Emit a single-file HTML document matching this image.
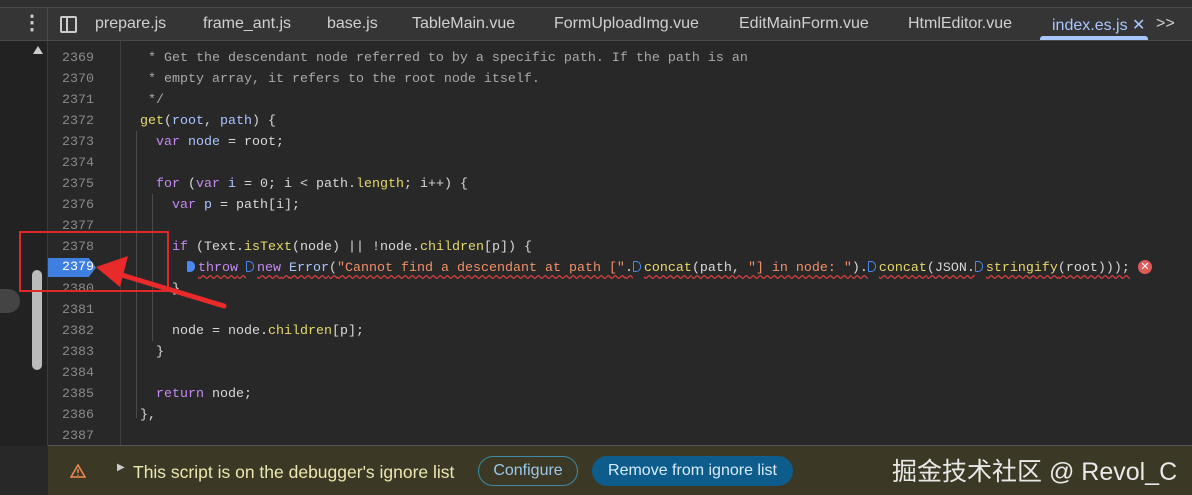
<!DOCTYPE html><html><head><meta charset="utf-8"><style>
body{margin:0;width:1192px;height:494px;background:#282828;overflow:hidden;position:relative;font-family:"Liberation Sans",sans-serif}
.top{position:absolute;left:0;top:0;width:1192px;height:7px;background:#303030;border-bottom:1px solid #4a4a4a}
.tabs{position:absolute;left:0;top:8px;width:1192px;height:32px;background:#353535;border-bottom:1px solid #4a4a4a;color:#d0d0d0;font-size:16px}
.tabs span{position:absolute;top:7px}
.left{position:absolute;left:0;top:41px;width:47px;height:405px;background:#222;border-right:1px solid #3c3c3c}
.gut{position:absolute;left:48px;top:41px;width:72px;height:405px;border-right:1px solid #3e3e3e}
.ln{position:absolute;left:48px;width:46px;text-align:right;font-family:"Liberation Mono",monospace;font-size:13.33px;color:#8a8a8a;line-height:21px;height:21px}
.cl{position:absolute;left:140px;font-family:"Liberation Mono",monospace;font-size:13.33px;color:#d8d8d8;line-height:21px;white-space:pre;height:21px}
.c{color:#a9a9a9}.k{color:#c58af0}.v{color:#a8c4ff}.f{color:#e6d96a}.s{color:#f0906a}
.g{position:absolute;width:1px;background:#4a4a4a}
.foot{position:absolute;left:48px;top:445px;width:1144px;height:49px;background:#3b3925;border-top:1px solid #555;color:#ece6b0;font-size:17.5px}
.m{display:inline-block;width:8px;height:11px;border:1px solid #4a8af0;border-radius:1px 5px 5px 1px;vertical-align:-1px;margin-right:3px;box-sizing:border-box}
.mf{background:#4a8af0}
</style></head><body>
<div class="top"></div>
<div class="tabs">
<span style="left:22px;font-size:20px;top:2px;font-weight:bold">⋮</span>
<div style="position:absolute;left:47px;top:0;width:1px;height:32px;background:#4a4a4a"></div>
<div style="position:absolute;left:60px;top:8px;width:13px;height:13px;border:2px solid #ccc;border-radius:2px"></div><div style="position:absolute;left:66px;top:8px;width:2px;height:15px;background:#ccc"></div>
<span style="left:95px">prepare.js</span><span style="left:203px">frame_ant.js</span><span style="left:327px">base.js</span><span style="left:412px">TableMain.vue</span><span style="left:554px">FormUploadImg.vue</span><span style="left:739px">EditMainForm.vue</span><span style="left:908px">HtmlEditor.vue</span><span style="left:1052px;color:#a8c6ff">index.es.js ✕</span><span style="left:1156px">&gt;&gt;</span>
<div style="position:absolute;left:1040px;top:28px;width:108px;height:4px;background:#a8c6ff;border-radius:3px 3px 0 0"></div>
</div>
<div class="left"></div>
<div style="position:absolute;left:33px;top:46px;width:0;height:0;border-left:5px solid transparent;border-right:5px solid transparent;border-bottom:8px solid #ccc"></div>
<div style="position:absolute;left:32px;top:270px;width:10px;height:100px;background:#bbb;border-radius:5px"></div>
<div style="position:absolute;left:-10px;top:289px;width:30px;height:24px;background:#444;border-radius:12px"></div>
<div class="gut"></div>
<div class="g" style="left:136px;top:131px;height:287px"></div>
<div class="g" style="left:152px;top:194px;height:147px"></div>
<div class="g" style="left:168px;top:257px;height:21px"></div>

<div class="ln" style="top:48px">2369</div><div class="ln" style="top:69px">2370</div><div class="ln" style="top:90px">2371</div><div class="ln" style="top:111px">2372</div><div class="ln" style="top:132px">2373</div><div class="ln" style="top:153px">2374</div><div class="ln" style="top:174px">2375</div><div class="ln" style="top:195px">2376</div><div class="ln" style="top:216px">2377</div><div class="ln" style="top:237px">2378</div>
<div style="position:absolute;left:48px;top:258px;width:48px;height:19px;background:#3f7fe0;clip-path:polygon(0 0,85% 0,100% 50%,85% 100%,0 100%)"></div>
<div class="ln" style="top:257px;color:#fff">2379</div>
<div class="ln" style="top:279px">2380</div><div class="ln" style="top:300px">2381</div><div class="ln" style="top:321px">2382</div><div class="ln" style="top:342px">2383</div><div class="ln" style="top:363px">2384</div><div class="ln" style="top:384px">2385</div><div class="ln" style="top:405px">2386</div><div class="ln" style="top:426px">2387</div>

<div class="cl c" style="top:48px"> * Get the descendant node referred to by a specific path. If the path is an</div>
<div class="cl c" style="top:69px"> * empty array, it refers to the root node itself.</div>
<div class="cl c" style="top:90px"> */</div>
<div class="cl" style="top:111px"><span class="f">get</span>(<span class="v">root</span>, <span class="v">path</span>) {</div>
<div class="cl" style="top:132px">  <span class="k">var</span> <span class="v">node</span> = root;</div>
<div class="cl" style="top:174px">  <span class="k">for</span> (<span class="k">var</span> <span class="v">i</span> = 0; i &lt; path.<span class="f">length</span>; i++) {</div>
<div class="cl" style="top:195px">    <span class="k">var</span> <span class="v">p</span> = path[i];</div>
<div class="cl" style="top:237px">    <span class="k">if</span> (Text.<span class="f">isText</span>(node) || !node.<span class="f">children</span>[p]) {</div>
<div class="cl" style="top:258px;left:187px;text-decoration:underline wavy #d04040;text-underline-offset:3px"><span class="m mf"></span><span class="k">throw</span> <span class="m"></span><span class="k">new</span> <span class="v">Error</span>(<span class="s">"Cannot find a descendant at path ["</span>.<span class="m"></span><span class="f">concat</span>(path, <span class="s">"] in node: "</span>).<span class="m"></span><span class="f">concat</span>(JSON.<span class="m"></span><span class="f">stringify</span>(root)));</div>
<div style="position:absolute;left:1138px;top:260px;width:14px;height:14px;border-radius:50%;background:#e05a5a;color:#fff;font-size:11px;line-height:14px;text-align:center">✕</div>
<div class="cl" style="top:279px">    }</div>
<div class="cl" style="top:321px">    node = node.<span class="f">children</span>[p];</div>
<div class="cl" style="top:342px">  }</div>
<div class="cl" style="top:384px">  <span class="k">return</span> node;</div>
<div class="cl" style="top:405px">},</div>

<div style="position:absolute;left:19px;top:231px;width:150px;height:61px;border:2px solid #e02828;box-sizing:border-box"></div>
<svg style="position:absolute;left:0;top:0" width="300" height="320"><line x1="224" y1="306" x2="112" y2="272" stroke="#e82a2a" stroke-width="5" stroke-linecap="round"/><polygon points="96,267 128,256 120,287" fill="#e82a2a"/></svg>

<div class="foot">
<svg style="position:absolute;left:22px;top:18px" width="16" height="14"><polygon points="8,1 15,13 1,13" fill="none" stroke="#f28b54" stroke-width="1.5"/><line x1="8" y1="5" x2="8" y2="9" stroke="#f28b54" stroke-width="1.5"/><circle cx="8" cy="11" r="0.8" fill="#f28b54"/></svg>
<span style="position:absolute;left:69px;top:16px;font-size:10px;color:#ccc">▶</span>
<span style="position:absolute;left:85px;top:16px">This script is on the debugger's ignore list</span>
<div style="position:absolute;left:430px;top:10px;width:100px;height:30px;border:1px solid #3e8aa8;border-radius:15px;box-sizing:border-box;color:#9cc8e8;text-align:center;line-height:28px;font-size:16px">Configure</div>
<div style="position:absolute;left:544px;top:10px;width:201px;height:30px;background:#0d5c8c;border-radius:15px;color:#d8ecff;text-align:center;line-height:30px;font-size:16px">Remove from ignore list</div>
<span style="position:absolute;left:844px;top:6px;font-size:25px;color:#e8e8e8;font-family:'Liberation Sans','Noto Sans CJK SC',sans-serif">掘金技术社区 @ Revol_C</span>
</div>
</body></html>
